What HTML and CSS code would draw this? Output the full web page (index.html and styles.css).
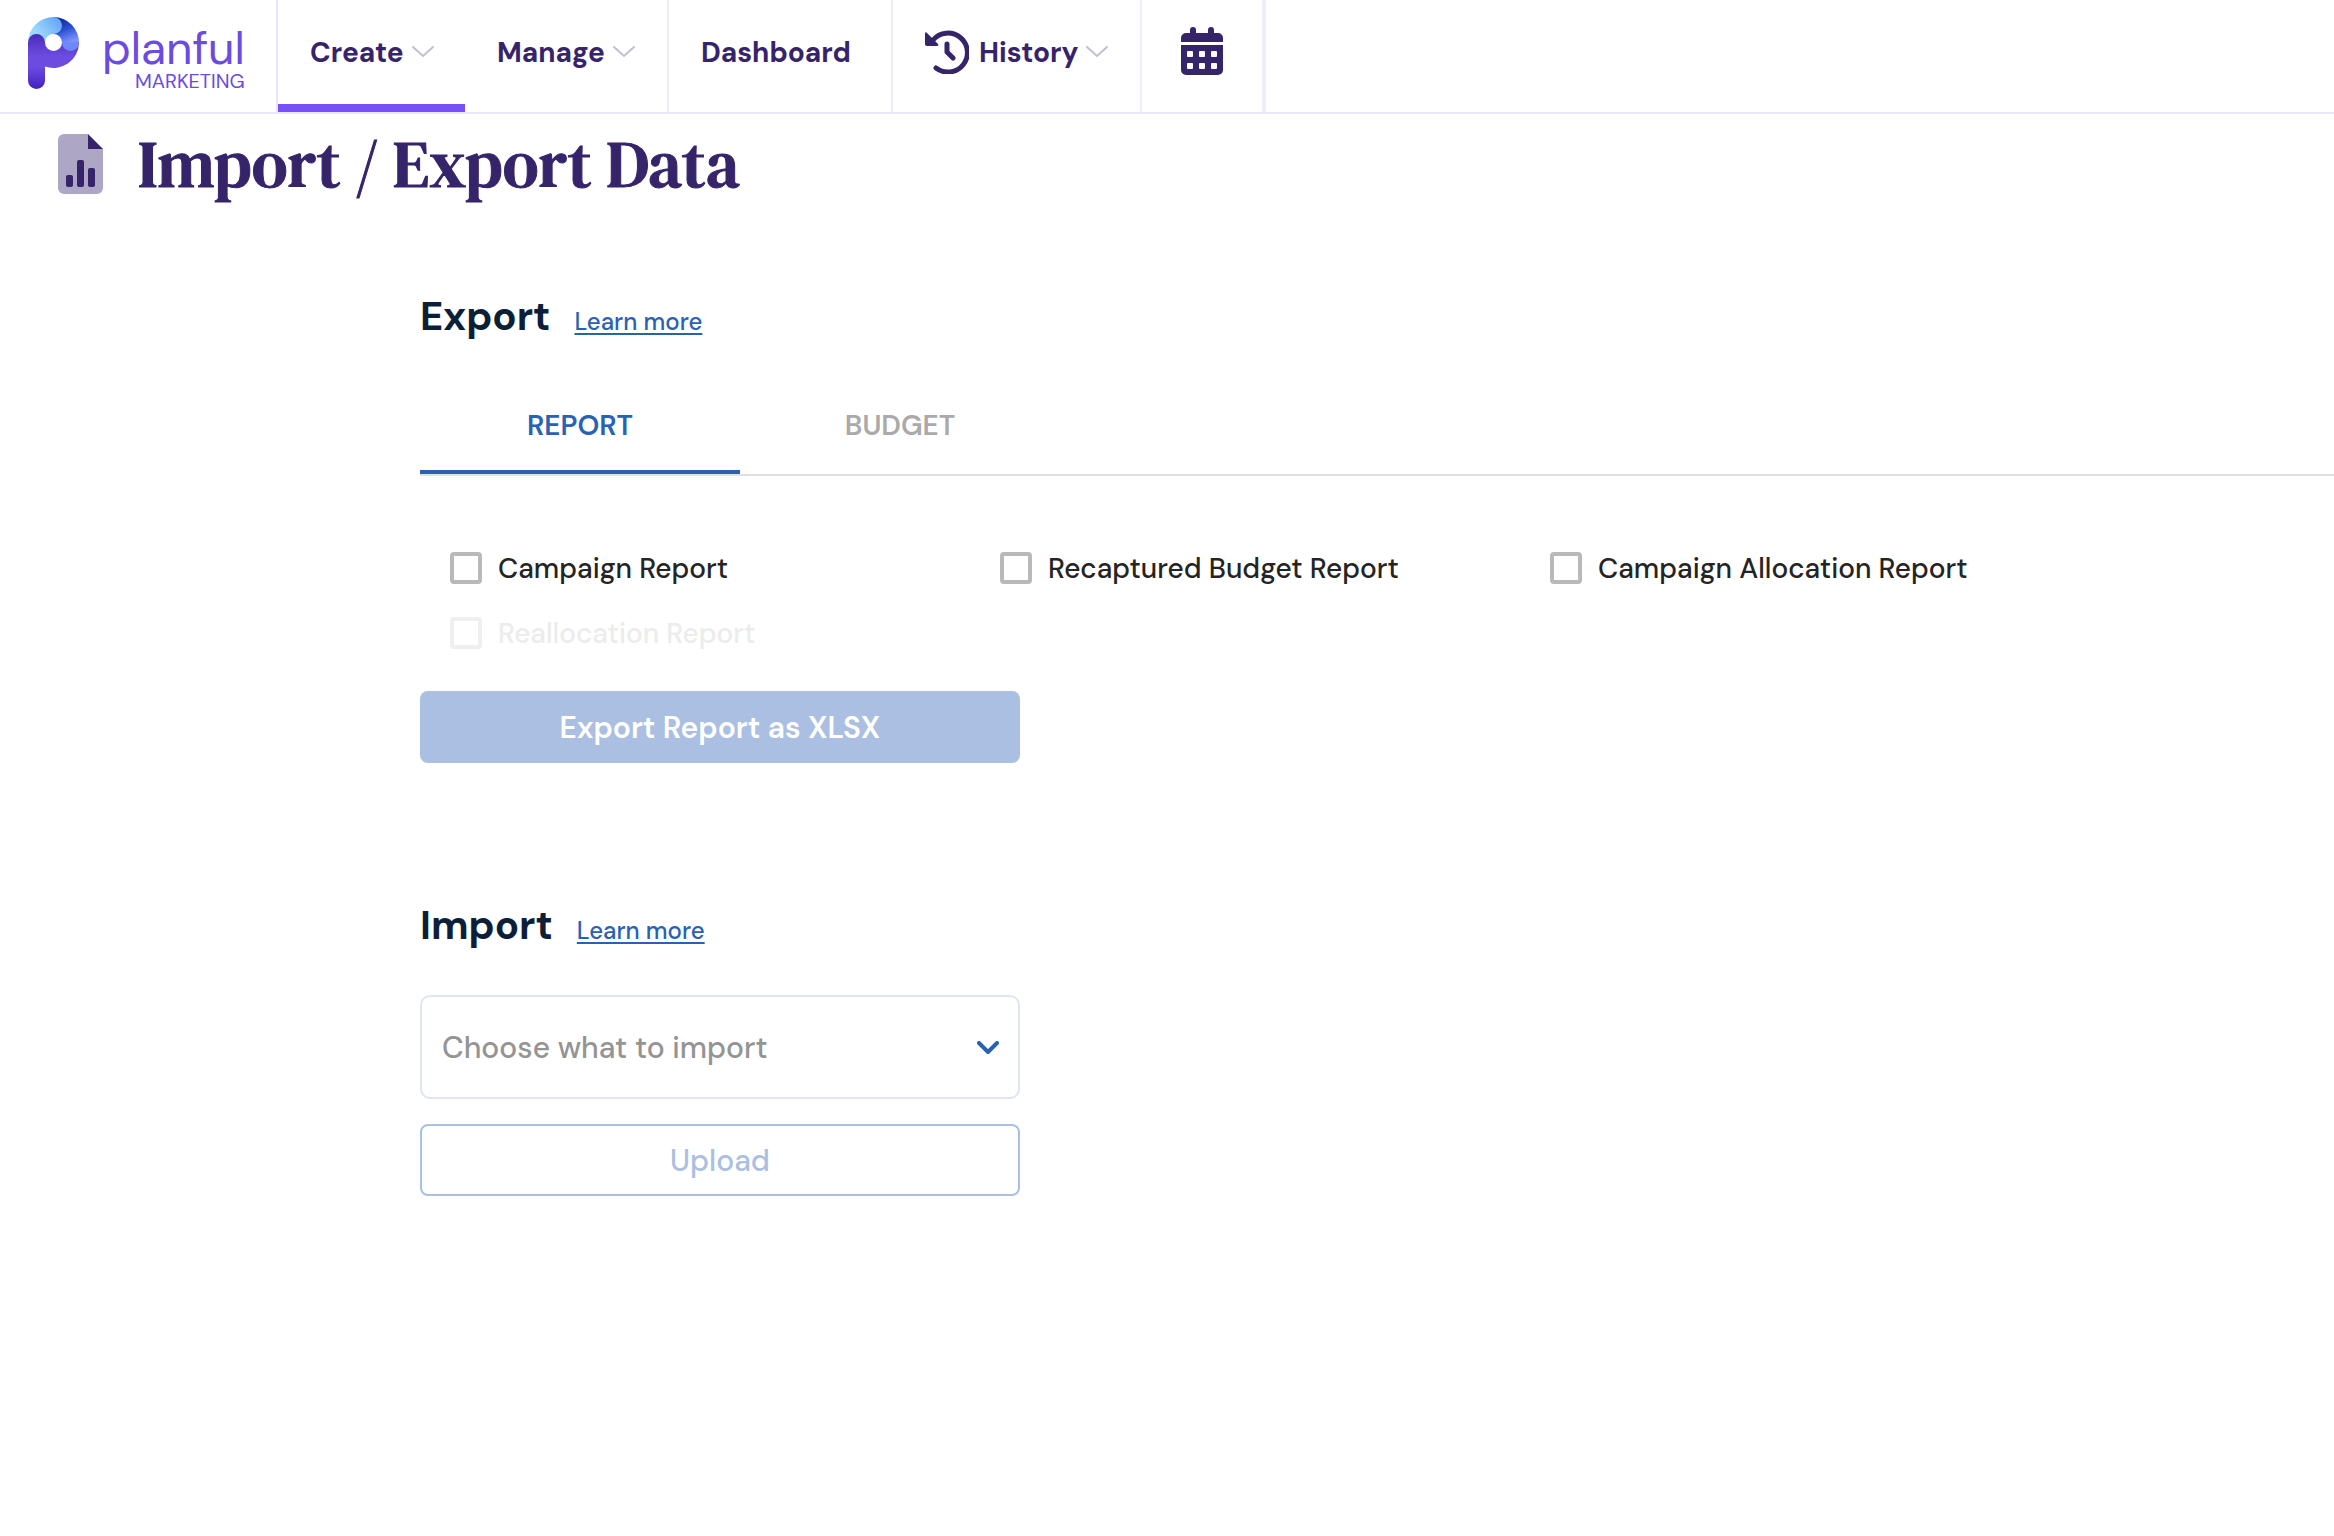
FILE: index.html
```html
<!DOCTYPE html>
<html lang="en">
<head>
<meta charset="utf-8">
<meta name="viewport" content="width=device-width, initial-scale=1">
<title>Import / Export Data</title>
<link rel="stylesheet" href="styles.css">
</head>
<body>
<header class="topbar">
  <a class="brand" href="#">
    <svg class="brand-mark" viewBox="0 0 52 74" aria-hidden="true">
      <defs>
        <linearGradient id="sky" x1="0" y1="0.6" x2="1" y2="0"><stop offset="0.2" stop-color="#9bd8ff"/><stop offset="1" stop-color="#5e9df5"/></linearGradient>
        <linearGradient id="deep" x1="0.2" y1="0" x2="0.6" y2="1"><stop offset="0" stop-color="#0a1f9e"/><stop offset="0.5" stop-color="#2a50cf"/><stop offset="1" stop-color="#7d93ff"/></linearGradient>
        <linearGradient id="violet" x1="0" y1="0" x2="0" y2="1"><stop offset="0" stop-color="#4a2cb8"/><stop offset="0.4" stop-color="#6b4be0"/><stop offset="0.6" stop-color="#6b4be0"/><stop offset="1" stop-color="#4220c0"/></linearGradient>
      </defs>
      <path fill="url(#deep)" d="M25.500 0a25.500 25.500 0 0 1 25.500 25.500H34a8.500 8.500 0 0 0-8.500-8.500z"/>
      <path fill="url(#sky)" d="M0 25.500a25.500 25.500 0 0 1 25.500-25.500a8.500 8.500 0 0 1 0 17a8.500 8.500 0 0 0-8.500 8.500z"/>
      <path fill="url(#violet)" d="M0 25.500a8.500 8.500 0 0 1 17 0a8.500 8.500 0 0 0 17 0h17a25.500 25.500 0 0 1-34 24v14a8.500 8.500 0 0 1-17 0z"/>
      <path fill="#7088f6" d="M34 25.500a8.500 8.500 0 0 0 17 0z"/>
    </svg>
    <span class="brand-text">
      <span class="brand-name">planful</span>
      <span class="brand-sub">MARKETING</span>
    </span>
  </a>
  <nav class="nav">
    <button class="nav-item active" type="button">Create
      <svg class="caret" viewBox="0 0 22 12" aria-hidden="true"><path d="M1 1l10 9 10-9"/></svg></button>
    <button class="nav-item manage" type="button">Manage
      <svg class="caret" viewBox="0 0 22 12" aria-hidden="true"><path d="M1 1l10 9 10-9"/></svg></button>
    <a class="nav-item dashboard" href="#">Dashboard</a>
    <button class="nav-item history" type="button">
      <svg class="icon-history" viewBox="0 0 44 44" aria-hidden="true"><path class="line" d="M8 10a19.500 19.500 0 1 1 3 28M22 14v8l6 6"/><path class="solid" d="M0 4c0-2 1-2 2-1l11 11c1 1 0 2-1 2H2c-1 0-2-1-2-2z"/></svg>
      History
      <svg class="caret" viewBox="0 0 22 12" aria-hidden="true"><path d="M1 1l10 9 10-9"/></svg></button>
    <a class="nav-item calendar" href="#" aria-label="Calendar">
      <svg class="icon-calendar" viewBox="0 0 42 48" aria-hidden="true"><path fill-rule="evenodd" d="M9 6V3a3 3 0 0 1 6 0v3h12V3a3 3 0 0 1 6 0v3h4a5 5 0 0 1 5 5v4H0v-4a5 5 0 0 1 5-5zM0 18h42v25a5 5 0 0 1-5 5H5a5 5 0 0 1-5-5zM7 24h4a1 1 0 0 1 1 1v4a1 1 0 0 1-1 1H7a1 1 0 0 1-1-1v-4a1 1 0 0 1 1-1zm12 0h4a1 1 0 0 1 1 1v4a1 1 0 0 1-1 1h-4a1 1 0 0 1-1-1v-4a1 1 0 0 1 1-1zm12 0h4a1 1 0 0 1 1 1v4a1 1 0 0 1-1 1h-4a1 1 0 0 1-1-1v-4a1 1 0 0 1 1-1zM7 36h4a1 1 0 0 1 1 1v4a1 1 0 0 1-1 1H7a1 1 0 0 1-1-1v-4a1 1 0 0 1 1-1zm12 0h4a1 1 0 0 1 1 1v4a1 1 0 0 1-1 1h-4a1 1 0 0 1-1-1v-4a1 1 0 0 1 1-1zm12 0h4a1 1 0 0 1 1 1v4a1 1 0 0 1-1 1h-4a1 1 0 0 1-1-1v-4a1 1 0 0 1 1-1z"/></svg></a>
  </nav>
</header>

<main>
  <div class="page-title">
    <svg class="icon-file" viewBox="0 0 45 60" aria-hidden="true"><path fill="#aea6c5" d="M6 0h24v15h15v39a6 6 0 0 1-6 6H6a6 6 0 0 1-6-6V6a6 6 0 0 1 6-6z"/><path fill="#36246b" d="M30 0l15 15H30z"/><g fill="#36246b"><rect x="8" y="41" width="7" height="12" rx="2"/><rect x="19" y="26" width="7" height="27" rx="2"/><rect x="30" y="34" width="7" height="19" rx="2"/></g></svg>
    <h1>Import / Export Data</h1>
  </div>

  <div class="content">
    <section>
      <div class="section-head"><h2>Export</h2><a href="#">Learn more</a></div>
      <div class="tabs" role="tablist">
        <button class="tab selected" type="button" role="tab" aria-selected="true">REPORT</button>
        <button class="tab" type="button" role="tab" aria-selected="false">BUDGET</button>
      </div>
      <div class="reports">
        <label class="check"><input type="checkbox">Campaign Report</label>
        <label class="check"><input type="checkbox">Recaptured Budget Report</label>
        <label class="check"><input type="checkbox">Campaign Allocation Report</label>
        <label class="check disabled"><input type="checkbox" disabled>Reallocation Report</label>
      </div>
      <button class="btn primary" type="button" disabled>Export Report as XLSX</button>
    </section>

    <section class="import">
      <div class="section-head"><h2>Import</h2><a href="#">Learn more</a></div>
      <div class="picker">
        <select aria-label="Choose what to import"><option>Choose what to import</option></select>
        <svg class="picker-caret" viewBox="0 0 22 14" aria-hidden="true"><path d="M2 2l9 9 9-9"/></svg>
      </div>
      <button class="btn outline" type="button" disabled>Upload</button>
    </section>
  </div>
</main>
</body>
</html>
```
FILE: styles.css
```css
* { box-sizing: border-box; }
body {
  margin: 0;
  background: #fff;
  color: #242424;
  font-family: "DM Sans", Inter, sans-serif;
  font-size: 28px;
}
button, select { font: inherit; color: inherit; }
h1, h2 { margin: 0; }

.topbar { display: flex; height: 114px; border-bottom: 2px solid #e9e5fd; }
.brand {
  display: flex;
  align-items: flex-start;
  gap: 22px;
  width: 278px;
  padding: 17px 0 0 28px;
  border-right: 2px solid #e9e5fd;
  color: #6b4be0;
  text-decoration: none;
}
.brand-mark { width: 52px; height: 74px; }
.brand-text { display: flex; flex-direction: column; align-items: flex-end; padding-top: 8px; }
.brand-name { font-size: 46px; line-height: 46px; }
.brand-sub { font-size: 20px; line-height: 20px; }

.nav { display: flex; }
.nav-item {
  display: flex;
  align-items: center;
  gap: 8px;
  padding: 0 30px 8px 32px;
  border: 0;
  border-right: 2px solid #f0edff;
  background: none;
  color: #36246b;
  font-weight: 700;
  text-decoration: none;
}
.nav-item.active { border-right: 0; box-shadow: inset 0 -8px #7750f8; width: 187px; }
.manage { width: 204px; }
.dashboard { width: 224px; }
.history { width: 249px; }
.nav-item.calendar { width: 124px; padding: 0 0 10px; justify-content: center; border-right-width: 4px; }
.caret { flex: none; width: 22px; height: 12px; fill: none; stroke: #c3bdd3; stroke-width: 2; stroke-linecap: round; }
.icon-history { flex: none; width: 44px; height: 44px; margin-right: 2px; }
.icon-history .line { fill: none; stroke: #36246b; stroke-width: 5; stroke-linecap: round; stroke-linejoin: round; }
.icon-history .solid { fill: #36246b; }
.icon-calendar { width: 42px; height: 48px; fill: #36246b; }

.page-title { display: flex; align-items: center; gap: 35px; height: 100px; padding-left: 58px; }
.icon-file { width: 45px; height: 60px; }
h1 { color: #36246b; font: 400 66px/80px "DM Serif Text", "DM Serif Display", "Liberation Serif", serif; -webkit-text-stroke: 1px #36246b; }

.content { padding: 78px 0 0 420px; }
.section-head { display: flex; align-items: baseline; gap: 24px; line-height: 48px; }
h2 { color: #0d1f38; font-size: 40px; font-weight: 700; }
.section-head a { color: #2962b3; font-size: 24px; font-weight: 500; text-underline-offset: 3px; text-decoration-thickness: 2px; }

.tabs { display: flex; margin-top: 30px; border-bottom: 2px solid #e0e0e0; }
.tab { width: 320px; height: 98px; padding: 0; border: 0; background: none; color: #aaa; font-weight: 600; }
.tab.selected { color: #2962b3; box-shadow: inset 0 -4px #2962b3; }

.reports { display: grid; grid-template-columns: repeat(3, 550px); row-gap: 25px; padding: 72px 30px 38px; }
.check { display: flex; align-items: center; gap: 16px; height: 40px; font-weight: 500; }
.check input { appearance: none; width: 32px; height: 32px; margin: 0; border: 4px solid #b9b9b9; border-radius: 4px; }
.check.disabled { color: #ececec; }
.check.disabled input { border-color: #efefef; }

.btn { display: block; width: 600px; height: 72px; padding: 0; border-radius: 8px; font-size: 30px; }
.btn.primary { border: 0; background: #aabfe1; color: #fff; font-weight: 600; }
.btn.outline { margin-top: 25px; border: 2px solid #aabfe1; background: #fff; color: #aabfe1; font-weight: 500; }

.import { margin-top: 138px; }
.picker { display: grid; align-items: center; width: 600px; margin-top: 40px; }
.picker > * { grid-area: 1 / 1; }
.picker select { appearance: none; width: 100%; height: 104px; padding: 0 60px 0 20px; border: 2px solid #dfe6f2; border-radius: 10px; background: #fff; color: #949494; font-size: 30px; font-weight: 500; }
.picker-caret { justify-self: end; width: 22px; height: 14px; margin: 2px 21px 0 0; fill: none; stroke: #2962b3; stroke-width: 4; stroke-linecap: round; stroke-linejoin: round; pointer-events: none; }
```
